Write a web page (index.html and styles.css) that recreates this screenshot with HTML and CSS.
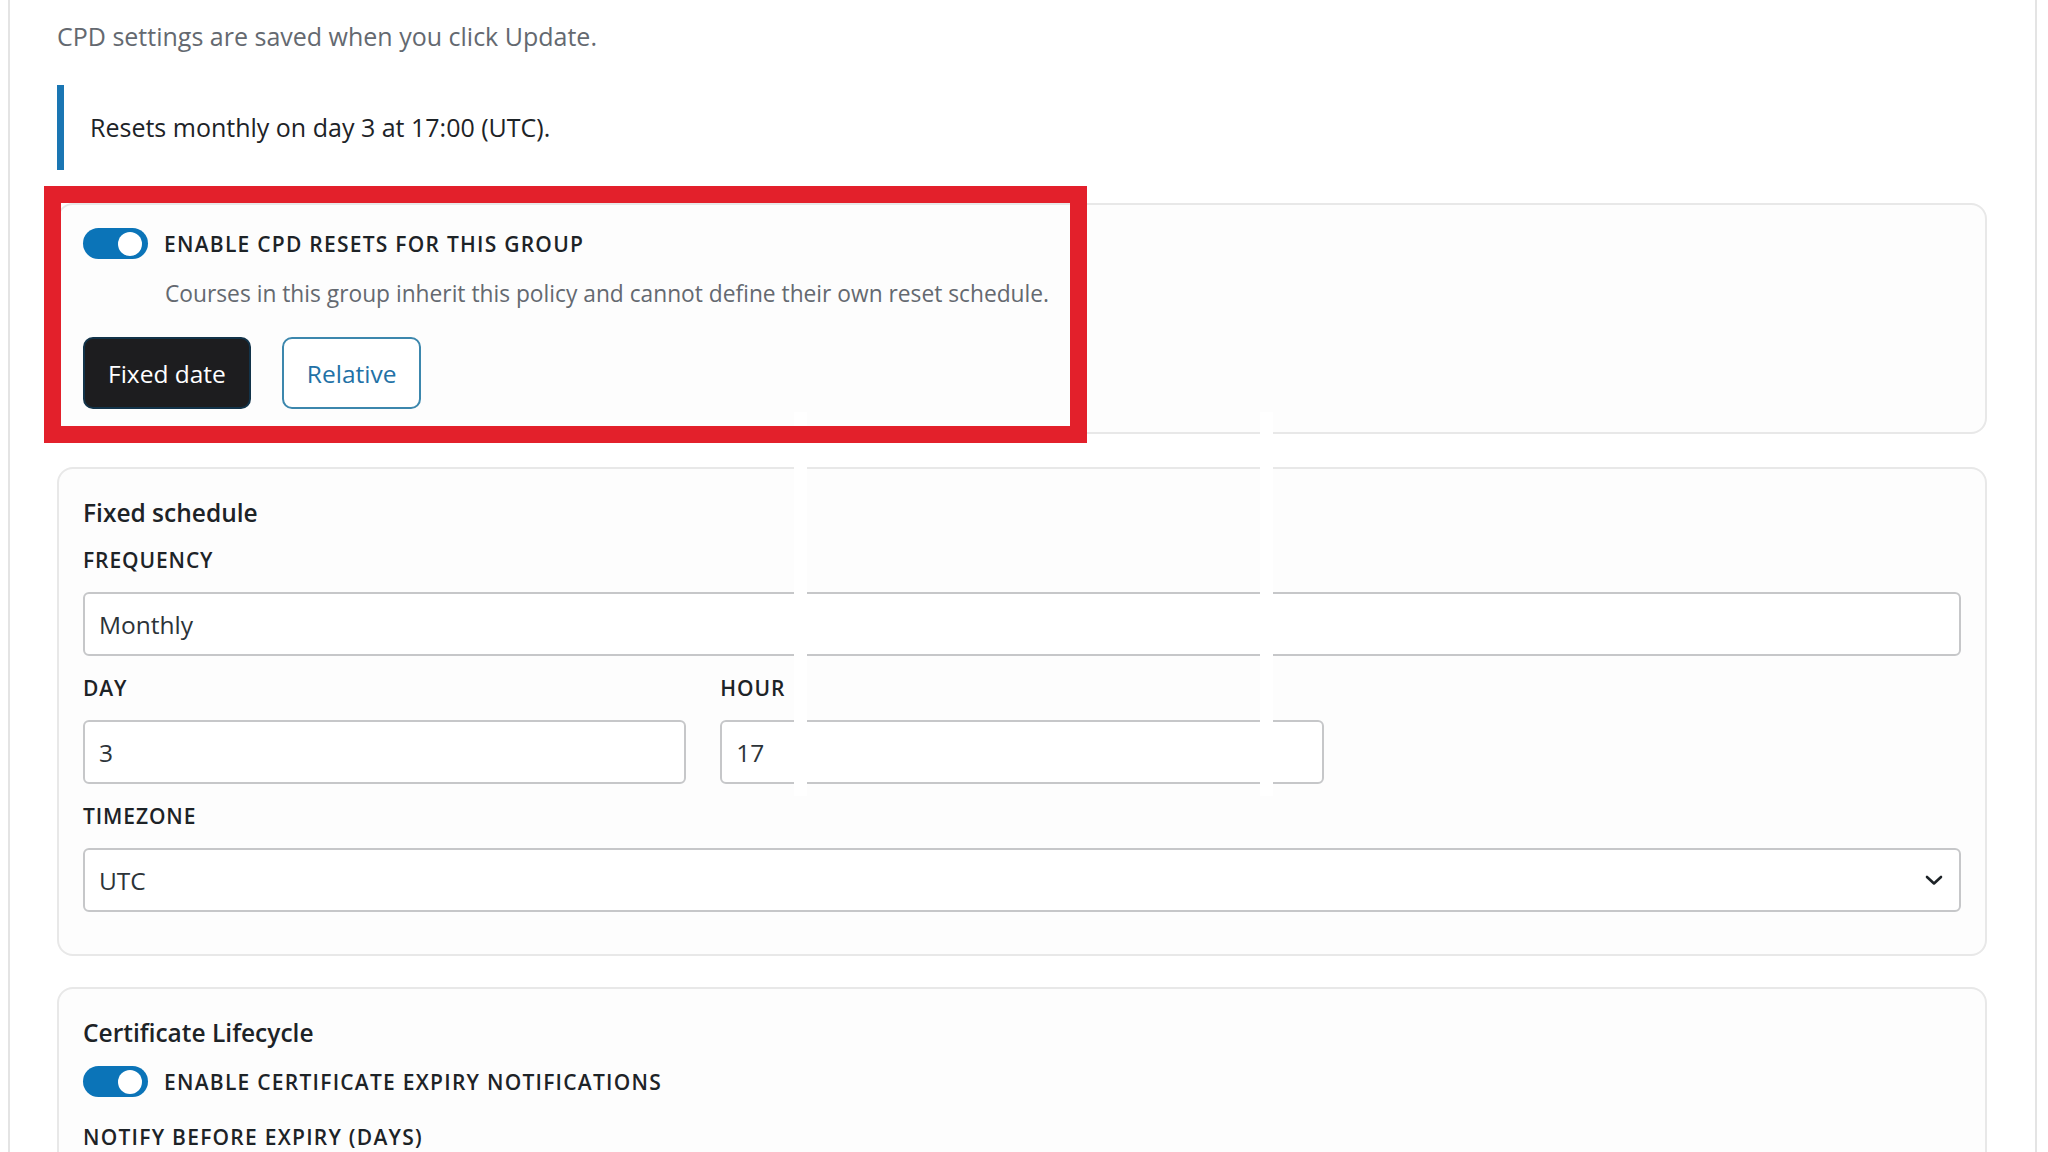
FILE: index.html
```html
<!DOCTYPE html>
<html lang="en">
<head>
<meta charset="utf-8">
<title>CPD settings</title>
<link rel="stylesheet" href="styles.css">
</head>
<body>
<div class="panel">
  <p class="intro">CPD settings are saved when you click Update.</p>
  <div class="notice">Resets monthly on day 3 at 17:00 (UTC).</div>

  <section class="card card-reset">
    <div class="toggle-row">
      <span class="toggle"><span class="knob"></span></span>
      <span class="toggle-label">Enable CPD resets for this group</span>
    </div>
    <p class="toggle-desc">Courses in this group inherit this policy and cannot define their own reset schedule.</p>
    <div class="btn-row">
      <button class="btn btn-dark" type="button">Fixed date</button>
      <button class="btn btn-outline" type="button">Relative</button>
    </div>
  </section>

  <section class="card">
    <h3 class="card-title">Fixed schedule</h3>
    <div class="field">
      <div class="field-label">Frequency</div>
      <input class="input" type="text" value="Monthly" readonly>
    </div>
    <div class="grid3">
      <div class="field">
        <div class="field-label">Day</div>
        <input class="input" type="text" value="3" readonly>
      </div>
      <div class="field">
        <div class="field-label">Hour</div>
        <input class="input" type="text" value="17" readonly>
      </div>
    </div>
    <div class="field field-last">
      <div class="field-label">Timezone</div>
      <div class="select-wrap">
        <select class="input select"><option>UTC</option></select>
        <svg class="chevron" width="18" height="11" viewBox="0 0 18 11"><path d="M2 2 L9 8.5 L16 2" fill="none" stroke="#1d2327" stroke-width="2.6" stroke-linecap="round" stroke-linejoin="round"/></svg>
      </div>
    </div>
  </section>

  <section class="card card-cert">
    <h3 class="card-title">Certificate Lifecycle</h3>
    <div class="toggle-row toggle-row-cert">
      <span class="toggle"><span class="knob"></span></span>
      <span class="toggle-label">Enable certificate expiry notifications</span>
    </div>
    <div class="field-label notify-label">Notify before expiry (days)</div>
  </section>

  <div class="stripe stripe-a"></div>
  <div class="stripe stripe-b"></div>
  <div class="highlight"></div>
</div>
</body>
</html>
```

FILE: styles.css
```css
html, body {
  margin: 0;
  padding: 0;
  background: #ffffff;
}

body {
  font-family: "Open Sans", "Noto Sans", "Liberation Sans", sans-serif;
  color: #1d2327;
  overflow: hidden;
  height: 1152px;
}

.panel {
  position: relative;
  box-sizing: border-box;
  margin-left: 8px;
  width: 2029px;
  min-height: 1300px;
  border-left: 2px solid #e4e4e4;
  border-right: 2px solid #e4e4e4;
  padding: 19px 48px 0 47px;
}

.intro {
  margin: 0;
  font-size: 25px;
  line-height: 34px;
  color: #646970;
}

.notice {
  margin-top: 32px;
  border-left: 7px solid #1a76b3;
  padding: 25px 26px;
  font-size: 25px;
  line-height: 35px;
  color: #1d2327;
}

.card {
  margin-top: 33px;
  border: 2px solid #e8e8e8;
  border-radius: 16px;
  background: #fdfdfd;
  padding: 23px 24px 25px;
}

.card-reset {
  padding-bottom: 23px;
}

.card-cert {
  margin-top: 31px;
}

.card-title {
  margin: 4px 0 0;
  font-size: 24.5px;
  line-height: 34px;
  font-weight: 600;
  color: #1d2327;
}

.toggle-row {
  display: flex;
  align-items: center;
  gap: 16px;
}

.toggle-row-cert {
  margin-top: 16px;
}

.toggle {
  display: flex;
  justify-content: flex-end;
  align-items: center;
  box-sizing: border-box;
  width: 65px;
  height: 31px;
  padding: 0 6px;
  border-radius: 16px;
  background: #0b74b8;
  flex: none;
}

.knob {
  width: 24px;
  height: 24px;
  border-radius: 50%;
  background: #ffffff;
}

.toggle-label,
.field-label {
  font-size: 21px;
  line-height: 30px;
  font-weight: 600;
  letter-spacing: 1.25px;
  text-transform: uppercase;
  color: #1d2327;
}

.field-label {
  letter-spacing: 0.9px;
}

.toggle-desc {
  margin: 18px 0 0;
  padding-left: 82px;
  font-size: 22.75px;
  line-height: 34px;
  color: #646970;
}

.btn-row {
  display: flex;
  gap: 31px;
  margin-top: 26px;
}

.btn {
  box-sizing: border-box;
  height: 72px;
  padding: 0 23px;
  border-radius: 10px;
  font-family: "Open Sans", "Noto Sans", "Liberation Sans", sans-serif;
  font-size: 24.5px;
  cursor: pointer;
}

.btn-dark {
  background: #1d1d1f;
  color: #ffffff;
  border: 2px solid #123349;
}

.btn-outline {
  background: #ffffff;
  color: #2271a6;
  border: 2px solid #3c87ad;
}

.field {
  margin-top: 17px;
}

.grid3 {
  display: grid;
  grid-template-columns: repeat(3, 1fr);
  column-gap: 34px;
}

.field-label {
  display: block;
}

.card-title + .field {
  margin-top: 15px;
}

.input {
  display: block;
  box-sizing: border-box;
  width: 100%;
  height: 64px;
  margin-top: 17px;
  padding: 0 14px;
  border: 2px solid #c6c7c9;
  border-radius: 6px;
  background: #ffffff;
  font-family: "Open Sans", "Noto Sans", "Liberation Sans", sans-serif;
  font-size: 24.5px;
  color: #2c3338;
  outline: none;
}

.field-last {
  margin-bottom: 17px;
}

.select-wrap {
  position: relative;
}

.select {
  appearance: none;
  -webkit-appearance: none;
}

.chevron {
  position: absolute;
  right: 18px;
  top: 27px;
  pointer-events: none;
}

.notify-label {
  margin-top: 25px;
  letter-spacing: 1.25px;
}

.stripe {
  position: absolute;
  top: 412px;
  height: 384px;
  width: 13px;
  background: #ffffff;
}

.stripe-a {
  left: 784px;
}

.stripe-b {
  left: 1250px;
}

.highlight {
  position: absolute;
  left: 34px;
  top: 186px;
  width: 1043px;
  height: 257px;
  box-sizing: border-box;
  border: 17px solid #e3202b;
  pointer-events: none;
}
```
